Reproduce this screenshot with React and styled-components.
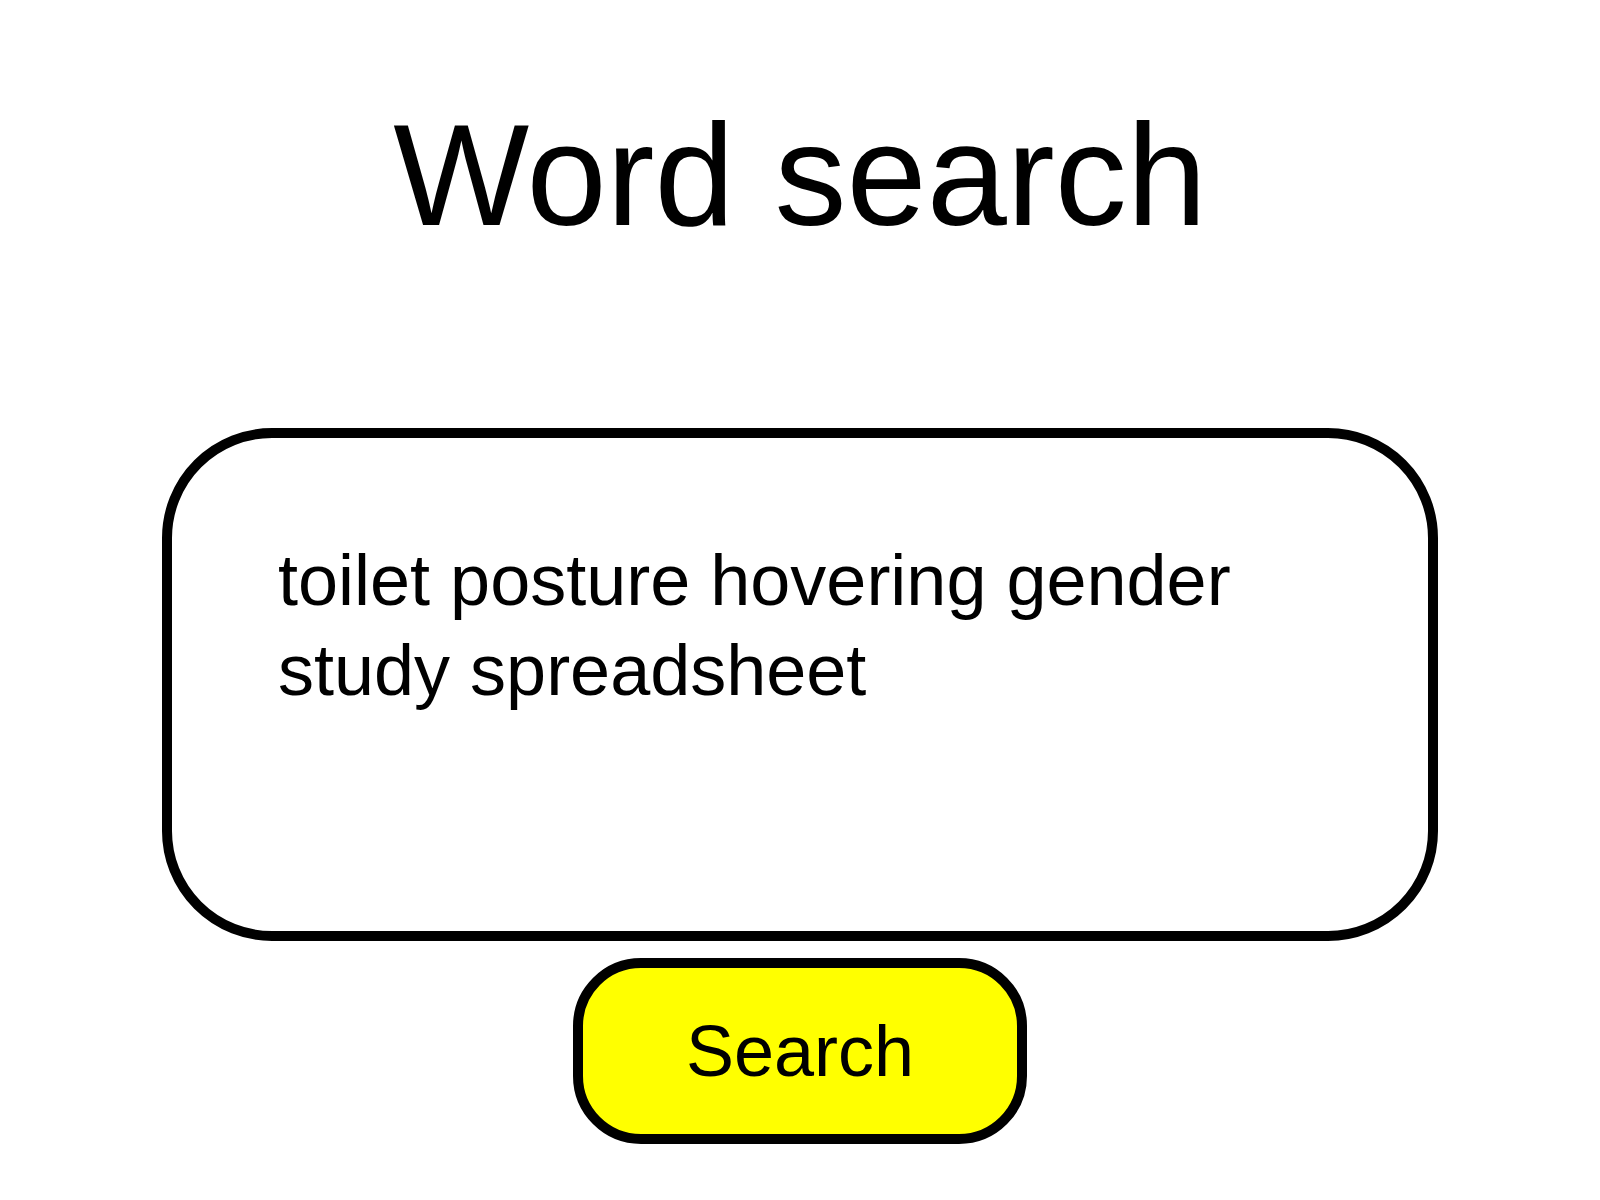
import React from 'react';
import styled, { createGlobalStyle } from 'styled-components';

const GlobalStyle = createGlobalStyle`
  html, body {
    margin: 0;
    padding: 0;
    background: #fff;
  }
  body {
    font-family: "Liberation Sans", Arial, Helvetica, sans-serif;
    color: #000;
  }
`;

const Page = styled.main`
  display: flex;
  flex-direction: column;
  align-items: center;
  padding-top: 93px;
  min-height: 1200px;
  box-sizing: border-box;
`;

const Title = styled.h1`
  margin: 0 0 169px;
  font-size: 144px;
  line-height: 166px;
  font-weight: normal;
  text-align: center;
`;

const WordBox = styled.textarea`
  display: block;
  box-sizing: border-box;
  width: 1276px;
  height: 513px;
  margin: 0;
  padding: 97px 104px 97px 106px;
  border: 10px solid #000;
  border-radius: 110px;
  background: #fff;
  color: #000;
  font-family: "Liberation Sans", Arial, Helvetica, sans-serif;
  font-size: 72px;
  line-height: 90px;
  resize: none;
  outline: none;
  overflow: hidden;
`;

const SearchButton = styled.button`
  box-sizing: border-box;
  width: 454px;
  height: 186px;
  margin-top: 17px;
  padding: 0;
  border: 10px solid #000;
  border-radius: 68px;
  background: #ffff00;
  color: #000;
  font-family: "Liberation Sans", Arial, Helvetica, sans-serif;
  font-size: 72px;
  cursor: pointer;
`;

export default function App() {
  return (
    <>
      <GlobalStyle />
      <Page>
        <Title>Word search</Title>
        <WordBox
          defaultValue="toilet posture hovering gender study spreadsheet"
          spellCheck={false}
        />
        <SearchButton type="button">Search</SearchButton>
      </Page>
    </>
  );
}
